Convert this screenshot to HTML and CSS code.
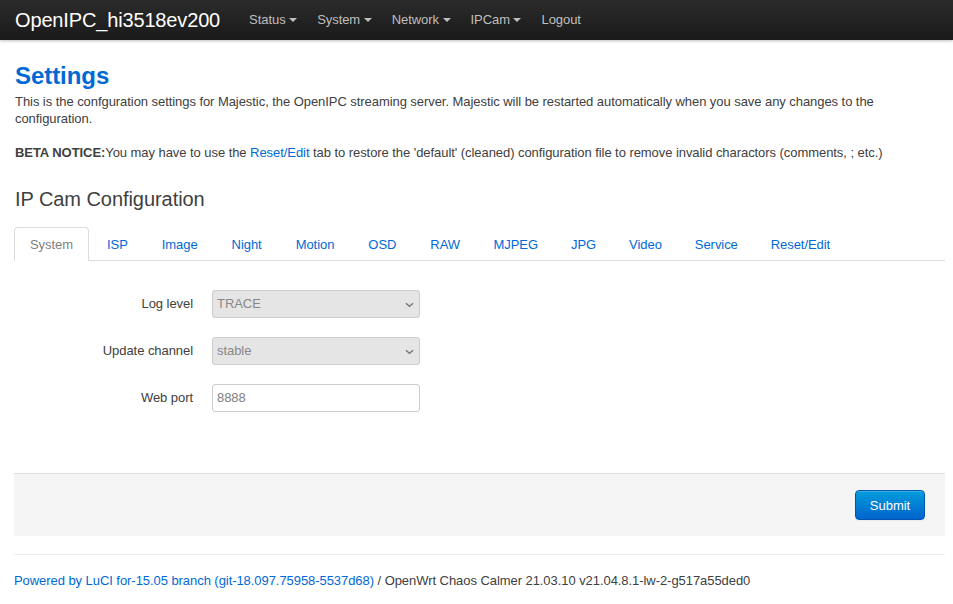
FILE: index.html
```html
<!DOCTYPE html>
<html>
<head>
<meta charset="utf-8">
<link rel="stylesheet" href="styles.css">
</head>
<body>
<header class="topbar">
  <a class="brand">OpenIPC_hi3518ev200</a>
  <ul class="nav">
    <li><a>Status <span class="caret"></span></a></li>
    <li><a>System <span class="caret"></span></a></li>
    <li><a>Network <span class="caret"></span></a></li>
    <li><a>IPCam <span class="caret"></span></a></li>
    <li><a>Logout</a></li>
  </ul>
</header>
<main class="container">
  <h2 class="title">Settings</h2>
  <p class="desc">This is the confguration settings for Majestic, the OpenIPC streaming server. Majestic will be restarted automatically when you save any changes to the configuration.</p>
  <p class="desc notice"><b>BETA NOTICE:</b>You may have to use the <a class="link">Reset/Edit</a> tab to restore the 'default' (cleaned) configuration file to remove invalid charactors (comments, ; etc.)</p>
  <h3 class="section">IP Cam Configuration</h3>
  <ul class="tabs">
    <li class="active"><a>System</a></li>
    <li><a>ISP</a></li>
    <li><a>Image</a></li>
    <li><a>Night</a></li>
    <li><a>Motion</a></li>
    <li><a>OSD</a></li>
    <li><a>RAW</a></li>
    <li><a>MJPEG</a></li>
    <li><a>JPG</a></li>
    <li><a>Video</a></li>
    <li><a>Service</a></li>
    <li><a>Reset/Edit</a></li>
  </ul>
  <div class="form">
    <div class="row">
      <label class="lbl">Log level</label>
      <div class="select"><span>TRACE</span><svg class="chev" viewBox="0 0 10 6" width="9" height="6"><path d="M1 1l4 3.5L9 1" fill="none" stroke="#777" stroke-width="1.6"/></svg></div>
    </div>
    <div class="row">
      <label class="lbl">Update channel</label>
      <div class="select"><span>stable</span><svg class="chev" viewBox="0 0 10 6" width="9" height="6"><path d="M1 1l4 3.5L9 1" fill="none" stroke="#777" stroke-width="1.6"/></svg></div>
    </div>
    <div class="row">
      <label class="lbl">Web port</label>
      <div class="input">8888</div>
    </div>
  </div>
  <div class="actions">
    <button class="btn">Submit</button>
  </div>
  <footer class="footer">
    <a class="link">Powered by LuCI for-15.05 branch (git-18.097.75958-5537d68)</a> / OpenWrt Chaos Calmer 21.03.10 v21.04.8.1-lw-2-g517a55ded0
  </footer>
</main>
</body>
</html>
```
FILE: styles.css
```css
* { box-sizing: border-box; }
html, body { margin: 0; padding: 0; background: #fff; }
body {
  font-family: "Liberation Sans", Arial, Helvetica, sans-serif;
  font-size: 13px;
  line-height: 18px;
  letter-spacing: -0.06px;
  color: #404040;
}
.topbar {
  height: 40px;
  background: linear-gradient(#2b2b2b, #1a1a1a);
  display: flex;
  align-items: center;
  padding-left: 15px;
  box-shadow: 0 1px 3px rgba(0,0,0,0.25);
}
.brand {
  color: #fff;
  font-size: 20px;
  letter-spacing: -0.15px;
  line-height: 40px;
  margin-right: 19px;
}
.nav {
  list-style: none;
  margin: 0;
  padding: 0;
  display: flex;
}
.nav a {
  display: block;
  color: #bfbfbf;
  font-size: 13px;
  line-height: 40px;
  padding: 0 10px;
}
.caret {
  display: inline-block;
  width: 0;
  height: 0;
  border-left: 4px solid transparent;
  border-right: 4px solid transparent;
  border-top: 4px solid #bfbfbf;
  vertical-align: middle;
  margin-left: 0;
  margin-top: -2px;
}
.container {
  margin: 0 8px 0 14px;
}
.title {
  margin: 21px 0 0 1px;
  font-size: 24px;
  line-height: 30px;
  font-weight: bold;
  color: #0069d6;
}
.desc {
  margin: 2px 0 0 1px;
  line-height: 17px;
}
.notice { margin-top: 17px; }
.notice b { color: #404040; }
.link { color: #0069d6; text-decoration: none; }
.section {
  margin: 24px 0 0 1px;
  font-size: 20px;
  line-height: 28px;
  font-weight: normal;
  color: #404040;
}
.tabs {
  list-style: none;
  margin: 14px 0 0 0;
  padding: 0;
  display: flex;
  border-bottom: 1px solid #ddd;
  height: 34px;
}
.tabs li a {
  display: block;
  line-height: 33px;
  padding: 0 15px;
  color: #0069d6;
  border: 1px solid transparent;
  border-bottom: none;
  border-radius: 4px 4px 0 0;
  margin-right: 2px;
}
.tabs li:nth-child(n+8) a { padding: 0 14.5px; }
.tabs li.active a {
  color: #808080;
  border-color: #ddd;
  background: #fff;
  height: 34px;
}
.form {
  padding: 29px 0 61px 0;
}
.row {
  display: flex;
  align-items: center;
  height: 28px;
  margin-bottom: 19px;
}
.row:last-child { margin-bottom: 0; }
.lbl {
  width: 179px;
  text-align: right;
  color: #404040;
  margin-right: 19px;
}
.select {
  width: 208px;
  height: 28px;
  background: #e5e5e5;
  border: 1px solid #ccc;
  border-radius: 3px;
  color: #888;
  display: flex;
  align-items: center;
  justify-content: space-between;
  padding: 0 5px 0 4px;
}
.chev { margin-top: 1px; }
.input {
  width: 208px;
  height: 28px;
  border: 1px solid #ccc;
  border-radius: 3px;
  color: #808080;
  display: flex;
  align-items: center;
  padding: 0 4px;
}
.actions {
  background: #f5f5f5;
  border-top: 1px solid #ddd;
  height: 63px;
  display: flex;
  justify-content: flex-end;
  align-items: flex-start;
  padding: 16px 20px 0 0;
}
.btn {
  font-family: inherit;
  font-size: 13px;
  color: #fff;
  width: 70px;
  height: 30px;
  border: 1px solid #0055b0;
  border-radius: 4px;
  background: linear-gradient(#049cdb, #0064cd);
  box-shadow: inset 0 1px 0 rgba(255,255,255,0.2), 0 1px 2px rgba(0,0,0,0.05);
}
.footer {
  margin-top: 18px;
  border-top: 1px solid #eee;
  padding-top: 17px;
  line-height: 18px;
  color: #404040;
}
```
